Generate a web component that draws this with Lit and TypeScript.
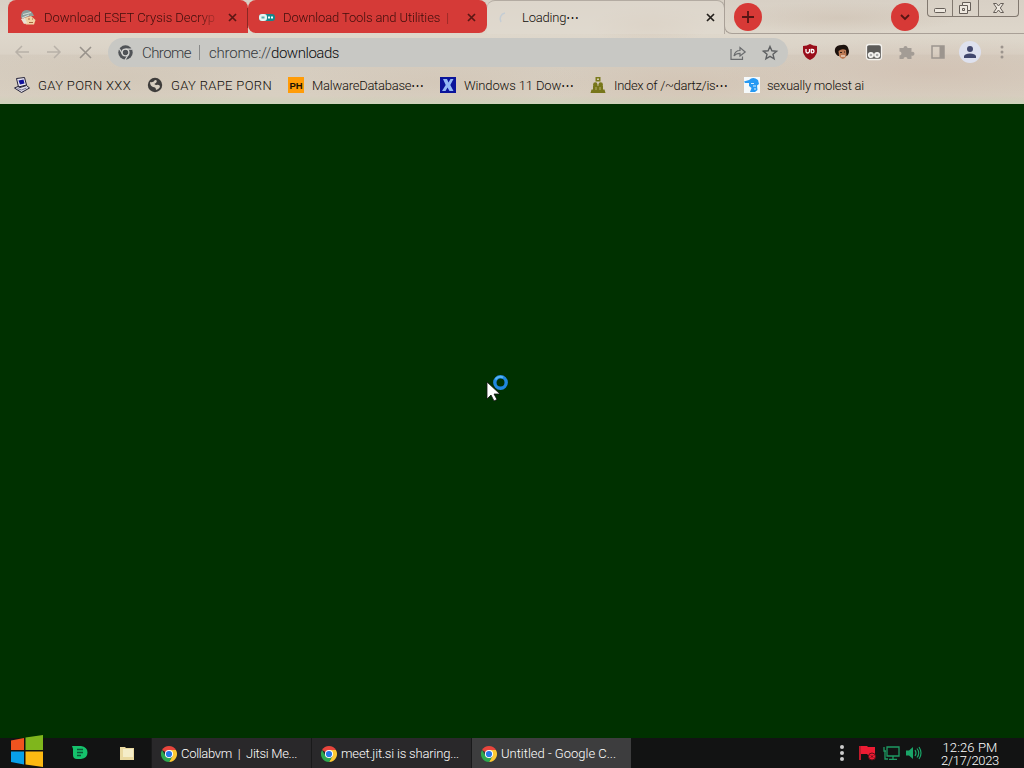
import { LitElement, html, css, svg } from "lit";
import { customElement, property } from "lit/decorators.js";

/** Single-line label that spreads its letters to fill the given width. */
@customElement("fit-label")
class FitLabel extends LitElement {
  static styles = css`
    :host { display: block; white-space: pre; flex: none; overflow: visible; }
    span { display: inline-block; }
  `;
  @property() text = "";
  @property({ type: Number }) width = 0;
  render() {
    return html`<span>${this.text}</span>`;
  }
  updated() {
    const s = this.renderRoot.querySelector("span") as HTMLElement;
    s.style.letterSpacing = "0px";
    const w = s.getBoundingClientRect().width;
    s.style.letterSpacing = (this.width - w) / this.text.length + "px";
    this.style.width = this.width + "px";
  }
}

const label = (text: string, width: number, cls = "") =>
  html`<fit-label class=${cls} .text=${text} .width=${width}></fit-label>`;

const icon = (w: number, h: number, body: unknown, cls = "") =>
  html`<svg class="ic ${cls}" width=${w} height=${h} viewBox="0 0 ${w} ${h}">${body}</svg>`;

const cross = svg`<path d="M1 1L8 8M8 1L1 8" stroke="currentColor" stroke-width="1.7" fill="none"/>`;

const chrome = () => html`<svg class="ic" width="16" height="16" viewBox="0 0 16 16">
  <path d="M8 8L1.07 4A8 8 0 0 1 14.93 4z" fill="#e8453c"/>
  <path d="M8 4h6.93A8 8 0 0 1 8 16l3.500-6z" fill="#fcc934"/>
  <path d="M1.07 4l3.400 6A4 4 0 0 0 11.500 10L8 16A8 8 0 0 1 1.070 4z" fill="#2da94f"/>
  <circle cx="8" cy="8" r="4.1" fill="#fff"/><circle cx="8" cy="8" r="3.1" fill="#2878e8"/></svg>`;

const art = {
  eset: svg`<path d="M1 7Q1 0 7 0Q12 0 14 6L10 6L2 9z" fill="#8c9d9b"/><path d="M3 4.500L11 2.500M2 8L9 5" stroke="#d6dfd8"/><path d="M4 8L11 6L15.500 10L14 14.500H6L4 12z" fill="#f1d1a5"/><path d="M1 9L5 8L7 13L4 14z" fill="#e9e1d3"/><path d="M8 9h2M12 9h1M9 12.500h4" stroke="#a8643c"/>`,
  tools: svg`<rect width="16" height="7" rx="3" y="4" fill="#16878b"/><rect y="4" width="8" height="7" rx="3" fill="#e9f4f2"/><path d="M2.500 6.500h3v2h-3z" fill="#5aa9aa"/><path d="M9 7.500h2M12 7.500h2" stroke="#fff" stroke-width="2"/>`,
  pc: svg`<path d="M2.500 1.500L10.500.5L12.500 8L4.500 10z" fill="#e8e6ef" stroke="#232138"/><path d="M4.500 3.500L9.500 2.500L10.500 6.500L6 7.500z" fill="#11119c"/><path d="M.5 11L4 9.500L6 10.500L12.500 8.500L15.500 11L7.500 15.500z" fill="#dddbe5" stroke="#232138"/><path d="M3.500 11.500l4 1.500l5-2" stroke="#7a7894" fill="none"/>`,
  globe: svg`<circle cx="8" cy="8" r="7.2" fill="#3f3d3c"/><path d="M3 5Q6 6 8 3Q11 3 9 6Q6 7 9 8Q13 7 13 10Q11 13 9 13Q9 10 6 10Q3 9 3 5z" fill="#d6cdbf"/>`,
  ph: svg`<rect width="16" height="16" fill="#ff9c08"/><text x="8" y="11.500" text-anchor="middle" font-family="Liberation Sans" font-weight="700" font-size="9.5" fill="#1c1203">PH</text>`,
  x: svg`<rect width="16" height="16" fill="#0a149b"/><path d="M3 2h4l1.500 3.500L10.500 2h3l-3.200 6l3.200 6h-4l-2-3.500l-2 3.500H2l3.700-6z" fill="#92b8f5"/>`,
  dartz: svg`<path d="M5.500 0h5v4.500h-5z" fill="#7b7b1d"/><path d="M7 1.500h2v1.500h-2z" fill="#d6cdae"/><circle cx="5.300" cy="7.500" r="2.200" fill="#77761a"/><circle cx="10.700" cy="7.500" r="2.200" fill="#77761a"/><path d="M3 8.500h10v4h1.500l1 3.500H.5l1-3.500H3z" fill="#77761a"/><path d="M6 10v3M10 10v3" stroke="#b3ae6e"/>`,
  face: svg`<rect width="16" height="16" fill="#f5f9fb"/><path d="M0 4.500L5 3Q9-1 14 3L15 7L13 8.500L13.500 13L11 15H6L7.500 11L5 9V6H1z" fill="#2699f3"/><path d="M7 6.500h3M9 9h3M10 12h2" stroke="#d8efff"/>`,
};

@customElement("app-root")
class AppRoot extends LitElement {
  static styles = css`
    :host { display: flex; flex-direction: column; width: 1024px; height: 768px; overflow: hidden;
      font: 300 13px/16px Roboto, "Liberation Sans", sans-serif; color: #120e0a; background: #003100; position: relative; }
    * { box-sizing: border-box; }
    .ic { display: block; flex: none; overflow: visible; }
    .frame { height: 104px; flex: none; display: flex; flex-direction: column;
      background:
        radial-gradient(ellipse 60px 20px at 650px 25px, #cdb8a550, transparent),
        radial-gradient(ellipse 160px 30px at 120px 78px, #c9bba950, transparent),
        radial-gradient(ellipse 150px 26px at 440px 82px, #cdbcaa50, transparent),
        radial-gradient(ellipse 160px 30px at 690px 84px, #ceb9a770, transparent),
        radial-gradient(ellipse 210px 34px at 930px 72px, #cdb6a770, transparent),
        radial-gradient(ellipse 120px 16px at 840px 18px, #c9b9a970, transparent),
        linear-gradient(#d8d0c5, #ded7cb 34%, #dad2c6 52%, #d5ccbf 53%, #d8cfc1 92%, #d3d0bd 96%, #cdd3ba); }
    .strip { height: 34px; flex: none; display: flex; padding-left: 8px; }
    .tab { height: 33px; display: flex; align-items: center; background: #d53a37; color: #3c0e0b;
      border-radius: 8px 8px 0 0; flex: none; padding-top: 2px; }
    .t1 { width: 240px; padding-left: 12px; gap: 8px; }
    .t2 { width: 239px; padding-left: 11px; gap: 8px; border-radius: 8px; }
    .clip { width: 172px; flex: none; -webkit-mask: linear-gradient(90deg, #000 90%, #0003); mask: linear-gradient(90deg, #000 90%, #0003); }
    .sep { width: 1px; height: 20px; background: #8b2824; margin-left: 2px; }
    .x1 { color: #5b1714; margin-left: 4px; }
    .x2 { color: #5b1714; margin-left: 4px; }
    .t3 { width: 238px; background: #e2dbd180; color: #120e0a; border: 1px solid #b3aba2; border-width: 1px 1px 0 0; height: 34px; padding: 0 0 0 12px; }
    .t3 .ic:first-child { margin-right: 9px; }
    .t3 .x3 { margin-left: 127px; color: #24201c; }
    .rest { flex: 1; display: flex; border-bottom: 1px solid #a9a097; border-left: 1px solid #a9a097; border-bottom-left-radius: 8px; margin-left: -1px; padding-left: 9px; }
    .round { width: 28px; height: 28px; border-radius: 50%; background: #d73936; display: flex; align-items: center; justify-content: center; margin-top: 3px; }
    .down { margin-left: 129px; }
    .wc { margin-left: 8px; width: 92px; height: 17px; border: 1px solid #81786f; border-top: 0; border-radius: 0 0 4px 4px; display: flex; }
    .wc div { display: flex; align-items: center; justify-content: center; }
    .wc div + div { border-left: 1px solid #81786f; }
    .wmin { width: 24px; } .wmax { width: 26px; padding-right: 2px; } .wclose { flex: 1; }
    .toolbar { height: 36px; flex: none; display: flex; align-items: center; padding-left: 14px; }
    .back { margin-right: 16px; } .fwd { margin-right: 17px; } .stop { margin-right: 16px; }
    .omni { width: 680px; height: 29px; border-radius: 15px; background: #c8c8c4; display: flex; align-items: center; padding-left: 10px; margin-top: 1px; font-size: 15px; }
    .omni .name { margin-left: 9px; color: #36393c; }
    .bar { width: 1px; height: 15px; background: #898a89; margin: 0 9px 0 8px; }
    .scheme { color: #36393c; } .path { color: #0b0c0e; }
    .share { margin-left: 391px; } .star { margin-left: 16px; }
    .ext { display: flex; align-items: center; gap: 16px; margin-left: 14px; }
    .avatar { width: 22px; height: 22px; border-radius: 50%; background: #dee1ee; display: flex; align-items: center; justify-content: center; margin: 0 -3px; }
    .marks { flex: 1; display: flex; align-items: center; padding: 0 0 3px 14px; }
    .mark { display: flex; align-items: center; gap: 8px; margin-right: 16px; }
    .mark:last-child { gap: 7px; }
    .mark .ic { margin-top: -1px; }
    .page { flex: 1; }
    .task { height: 30px; flex: none; display: flex; align-items: stretch; background: #121313; color: #fff; }
    .start { width: 33px; margin: -3px 0 0 10px; }
    .pin1 { width: 16px; margin: 7px 0 0 29px; } .pin2 { margin: 8px 0 0 32px; width: 31px; }
    .win { display: flex; flex: none; align-items: center; gap: 4px; width: 160px; padding: 1px 0 0 9px; background: #29282a; border-left: 1px solid #19191a; }
    .win.on { background: #3d3d3e; }
    .tray { display: flex; align-items: center; margin-left: auto; padding-right: 25px; }
    .flag { margin-left: 15px; } .net { margin-left: 6px; } .vol { margin-left: 6px; }
    .clock { display: flex; flex-direction: column; align-items: center; line-height: 13px; margin-left: 19px; padding-top: 2px; font-size: 13px; }
    .clock fit-label { height: 13px; }
    .cursor { position: absolute; left: 486px; top: 374px; }
  `;

  private bookmarks: [unknown, string, number][] = [
    [art.pc, "GAY PORN XXX", 93],
    [art.globe, "GAY RAPE PORN", 101],
    [art.ph, "MalwareDatabase⋯", 112],
    [art.x, "Windows 11 Dow⋯", 110],
    [art.dartz, "Index of /~dartz/is⋯", 114],
    [art.face, "sexually molest ai", 97],
  ];

  private windows: [string, number, string][] = [
    ["Collabvm  |  Jitsi Me...", 116, ""],
    ["meet.jit.si is sharing...", 118, ""],
    ["Untitled - Google C...", 115, "on"],
  ];

  render() {
    return html`
      <div class="frame">
        <div class="strip">
          <div class="tab t1">${icon(16, 16, art.eset)}<div class="clip">${label("Download ESET Crysis Decryp", 171)}</div>
            ${icon(9, 9, cross, "x1")}<div class="sep"></div></div>
          <div class="tab t2">${icon(16, 16, art.tools)}<div class="clip">${label("Download Tools and Utilities  |", 166)}</div>
            ${icon(9, 9, cross, "x2")}</div>
          <div class="tab t3">${icon(14, 16, svg`<path d="M2 12A6 6 0 0 1 6 3" fill="none" stroke="#c5cdd4" stroke-width="1.5"/>`)}${label("Loading⋯", 57)}
            ${icon(9, 9, cross, "x3")}</div>
          <div class="rest">
            <div class="round">${icon(12, 12, svg`<path d="M6 0v12M0 6h12" stroke="#561513" stroke-width="1.8"/>`)}</div>
            <div class="round down">${icon(10, 6, svg`<path d="M1 1l4 4l4-4" fill="none" stroke="#561513" stroke-width="1.8"/>`)}</div>
            <div class="wc">
              <div class="wmin">${icon(12, 5, svg`<rect x=".5" y="2.5" width="11" height="4" rx="1" fill="#eee8df" stroke="#655e58"/>`)}</div>
              <div class="wmax">${icon(12, 12, svg`<path d="M3.500.5h8v8h-3v3h-8v-8h3z" fill="#eee8df" stroke="#655e58"/><path d="M3.500 3.500h5V8.500M3.500 6.500h2v2h-2z" fill="none" stroke="#655e58"/>`)}</div>
              <div class="wclose">${icon(11, 10, svg`<path d="M.5.5h3l2 2.500l2-2.500h3L7.300 5l3.200 4.500h-3l-2-2.500l-2 2.500h-3L3.700 5z" fill="#eee8df" stroke="#655e58"/>`)}</div>
            </div>
          </div>
        </div>
        <div class="toolbar">
          ${icon(16, 14, svg`<path d="M15 7H2M8 1L2 7l6 6" fill="none" stroke="#b8b1a8" stroke-width="1.5"/>`, "back")}
          ${icon(16, 14, svg`<path d="M1 7h13M8 1l6 6l-6 6" fill="none" stroke="#b8b1a8" stroke-width="1.5"/>`, "fwd")}
          ${icon(13, 13, svg`<path d="M1 1l11 11M12 1L1 12" stroke="#98928b" stroke-width="1.6"/>`, "stop")}
          <div class="omni">
            ${icon(15, 15, svg`<circle cx="7.5" cy="7.5" r="7.2" fill="#505357"/><circle cx="7.5" cy="7.5" r="3.400" fill="#505357" stroke="#d5d5d2" stroke-width="1.400"/><path d="M7.500 4.100h6.500M4.600 9.300L1.400 3.700M10.400 9.300L7 15" stroke="#d5d5d2" stroke-width="1.200"/>`)}
            ${label("Chrome", 49, "name")}
            <div class="bar"></div>
            ${label("chrome://", 62, "scheme")}${label("downloads", 68, "path")}
            ${icon(16, 14, svg`<path d="M1 3v10.400h11.500V10.500M4 10Q5 4.500 10 4.500V1.500L15.200 6L10 10V7.300Q6 7.300 4 10z" fill="none" stroke="#6a6c6e" stroke-width="1.200"/>`, "share")}
            ${icon(16, 15, svg`<path d="M8 1.500l1.900 4.300l4.700.4L11 9.300l1.100 4.600L8 11.400l-4.100 2.500L5 9.300L1.400 6.200l4.700-.4z" fill="none" stroke="#5e6062" stroke-width="1.400"/>`, "star")}
          </div>
          <div class="ext">
            ${icon(16, 16, svg`<path d="M8 0Q11 2 15 2V8Q14 13 8 16Q2 13 1 8V2Q5 2 8 0z" fill="#990e1b"/><path d="M4 5v2.500q0 1.500 1.500 1.500T7.500 7.500V5M9.300 9V5.500h1a1.700 1.700 0 0 1 0 3.400h-1" fill="none" stroke="#fff" stroke-width="1.300"/>`)}
            ${icon(16, 16, svg`<path d="M8 1Q13 0 14.500 5Q16 9 13 12L4 12Q0 9 1 5Q2 1 8 1z" fill="#1c110d"/><path d="M4.500 7Q8 4 12 6L12.500 12Q9 18 5 12z" fill="#bc7a55"/><path d="M6 8.500h2M10 8h1" stroke="#352017"/><path d="M7 12h4" stroke="#f2dfce" stroke-width="1.300"/>`)}
            ${icon(16, 16, svg`<rect x=".5" y=".5" width="15" height="15" rx="2.500" fill="#5c5b59" stroke="#f4f2ee" stroke-width="1.300"/><circle cx="4.900" cy="11" r="2.200" fill="#aaa" stroke="#f6f5f2" stroke-width="1.700"/><circle cx="11.100" cy="11" r="2.200" fill="#aaa" stroke="#f6f5f2" stroke-width="1.700"/>`)}
            ${icon(16, 16, svg`<path d="M1.500 4h4a2 2 0 1 1 4 0h4v4a2 2 0 1 1 0 3.500v3.500H9.500a2 2 0 0 0-4 0h-4v-3.500a2 2 0 0 0 0-4z" fill="#a39c95"/>`)}
            ${icon(16, 16, svg`<rect x="2" y="2" width="12" height="12" fill="none" stroke="#9c958e" stroke-width="1.500"/><path d="M9.500 2h4.500v12h-4.500z" fill="#9c958e"/>`)}
            <div class="avatar">${icon(12, 12, svg`<circle cx="6" cy="3" r="3" fill="#42486e"/><path d="M0 12V10Q1 7.500 6 7.500T12 10V12z" fill="#42486e"/>`)}</div>
            ${icon(16, 16, svg`<circle cx="8" cy="3" r="1.500" fill="#9c948d"/><circle cx="8" cy="8" r="1.500" fill="#9c948d"/><circle cx="8" cy="13" r="1.500" fill="#9c948d"/>`)}
          </div>
        </div>
        <div class="marks">
          ${this.bookmarks.map(([a, t, w]) => html`<div class="mark">${icon(16, 16, a)}${label(t, w)}</div>`)}
        </div>
      </div>
      <div class="page"></div>
      <div class="task">
        <div class="start">${icon(33, 32, svg`<path d="M1 5.500L14 3V15H1z" fill="#f0531f"/><path d="M15.500 2.500L33 0V15H15.500z" fill="#7fb61c"/><path d="M1 16.500H14V29.500L1 27z" fill="#08a0ea"/><path d="M15.500 16.500H33V32L15.500 29.500z" fill="#fdb912"/>`)}</div>
        <div class="pin1">${icon(16, 15, svg`<path d="M0 1h9Q15.500 2 15.500 7.500T9 14H5Q1 14 1 10V4z" fill="#15c26c"/><path d="M5 4.500h6M5 7.500h6M5 10.500h4" stroke="#0b5735" stroke-width="1.400"/>`)}</div>
        <div class="pin2">${icon(14, 14, svg`<path d="M0 1h5l1 1h8v12H0z" fill="#ead9a0"/><path d="M3 3h10v8H3z" fill="#f5edc8"/>`)}</div>
        ${this.windows.map(([t, w, c]) => html`<div class="win ${c}">${chrome()}${label(t, w)}</div>`)}
        <div class="tray">
          ${icon(4, 16, svg`<circle cx="2" cy="2" r="2" fill="#ccc"/><circle cx="2" cy="8" r="2" fill="#ccc"/><circle cx="2" cy="14" r="2" fill="#ccc"/>`)}
          ${icon(18, 16, svg`<path d="M1 1v14" stroke="#ed1c33" stroke-width="1.600"/><path d="M2 1h6l1 1h7v8H9L8 9H2z" fill="#ed1c33"/><circle cx="13" cy="11.500" r="3.500" fill="#ed1c33" stroke="#5d0d17"/><path d="M11.800 10.300l2.400 2.400M14.200 10.300l-2.400 2.400" stroke="#5d0d17"/>`, "flag")}
          ${icon(17, 16, svg`<path d="M4 2h12v9H4zM10 11v3M6 14.300h8M1 2v4h2M2 6v8h3" fill="none" stroke="#1e9b63" stroke-width="1.300"/>`, "net")}
          ${icon(16, 14, svg`<path d="M0 4.500h3l4-3.500v12L3 9.500H0z" fill="#1aa568"/><path d="M9 4q2 3 0 6M11 2.500q3.500 4.500 0 9M13 1q4 6 0 12" fill="none" stroke="#1aa568" stroke-width="1.200"/>`, "vol")}
          <div class="clock">${label("12:26 PM", 55)}${label("2/17/2023", 58)}</div>
        </div>
      </div>
      <svg class="cursor" width="23" height="28"><path d="M1 8v17l4-4l3 6l3-1.500l-3-5.500h6z" fill="#fff" stroke="#111" stroke-width=".8"/><circle cx="14.500" cy="8.500" r="5.700" fill="none" stroke="#1f87df" stroke-width="3.400"/><path d="M9.500 5.500A5.700 5.700 0 0 1 17 3.500" fill="none" stroke="#56b3f5" stroke-width="2"/></svg>
    `;
  }
}
